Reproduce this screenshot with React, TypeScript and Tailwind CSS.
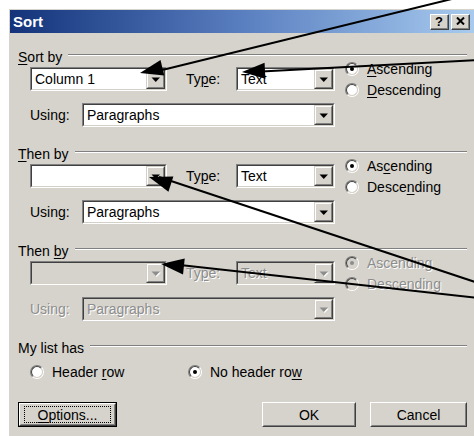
import React from 'react'

type Pt = [number, number]

// pointer arrows drawn over the dialog
const pointers: { tip: Pt; tail: Pt }[] = [
  { tip: [140, 73], tail: [464, -4] },
  { tip: [242, 72], tail: [478, 60] },
  { tip: [149, 177], tail: [478, 283] },
  { tip: [161, 264], tail: [478, 298] },
]

function headPoints(tip: Pt, tail: Pt, len = 23, half = 8) {
  const dx = tail[0] - tip[0]
  const dy = tail[1] - tip[1]
  const d = Math.hypot(dx, dy)
  const ux = dx / d
  const uy = dy / d
  const bx = tip[0] + ux * len
  const by = tip[1] + uy * len
  const px = -uy * half
  const py = ux * half
  return `${tip[0]},${tip[1]} ${bx + px},${by + py} ${bx - px},${by - py}`
}

function Mn({ children }: { children: React.ReactNode }) {
  return <span className="underline decoration-1 underline-offset-[2px]">{children}</span>
}

function DropButton({ disabled }: { disabled?: boolean }) {
  return (
    <div className="h-full w-[19px] border border-t-[#d4d0c8] border-l-[#d4d0c8] border-b-[#404040] border-r-[#404040]">
      <div className="flex h-full w-full items-center justify-center border border-t-white border-l-white border-b-[#808080] border-r-[#808080] bg-[#d6d3cc]">
        <svg width="10" height="6" viewBox="0 0 10 6" className="mt-[1px]">
          {disabled && <polygon points="1.5,1.5 10,1.5 5.75,6" fill="#ffffff" />}
          <polygon points="0.5,0.5 9,0.5 4.75,5" fill={disabled ? '#8d8d8d' : '#000000'} />
        </svg>
      </div>
    </div>
  )
}

function Combo({ className, value, disabled }: { className: string; value?: string; disabled?: boolean }) {
  return (
    <div className={`h-[24px] border border-t-[#808080] border-l-[#808080] border-b-white border-r-white ${className}`}>
      <div
        className={`flex h-full w-full border border-t-[#404040] border-l-[#404040] border-b-[#d4d0c8] border-r-[#d4d0c8] ${
          disabled ? 'bg-[#d6d3cc]' : 'bg-white'
        }`}
      >
        <div
          className={`flex flex-1 items-center pl-[3px] ${
            disabled ? 'text-[#8d8d8d] [text-shadow:1px_1px_0_#ffffff]' : 'text-black'
          }`}
        >
          {value}
        </div>
        <DropButton disabled={disabled} />
      </div>
    </div>
  )
}

function Radio({ checked, disabled }: { checked?: boolean; disabled?: boolean }) {
  return (
    <span className="inline-flex h-[14px] w-[14px] shrink-0 rounded-full border border-t-[#808080] border-l-[#808080] border-b-white border-r-white">
      <span
        className={`flex h-full w-full items-center justify-center rounded-full border border-t-[#404040] border-l-[#404040] border-b-[#d4d0c8] border-r-[#d4d0c8] ${
          disabled ? 'bg-[#d6d3cc]' : 'bg-white'
        }`}
      >
        {checked && <span className={`h-[4px] w-[4px] rounded-full ${disabled ? 'bg-[#8d8d8d]' : 'bg-black'}`} />}
      </span>
    </span>
  )
}

function RadioRow({ checked, disabled, children }: { checked?: boolean; disabled?: boolean; children: React.ReactNode }) {
  return (
    <div className="flex h-[16px] items-center">
      <Radio checked={checked} disabled={disabled} />
      <span className={`ml-[8px] ${disabled ? 'text-[#8d8d8d] [text-shadow:1px_1px_0_#ffffff]' : ''}`}>{children}</span>
    </div>
  )
}

function GroupLabel({ children, className = '' }: { children: React.ReactNode; className?: string }) {
  return (
    <div className={`flex h-[16px] items-center ${className}`}>
      <span>{children}</span>
      <div className="mb-[4px] ml-[6px] h-0 flex-1 border-t border-b border-t-[#808080] border-b-white" />
    </div>
  )
}

function SortGroup({
  label,
  field,
  disabled,
  first,
}: {
  label: React.ReactNode
  field?: string
  disabled?: boolean
  first?: boolean
}) {
  const dim = disabled ? 'text-[#8d8d8d] [text-shadow:1px_1px_0_#ffffff]' : ''
  return (
    <div className={first ? '' : 'mt-[19px]'}>
      <GroupLabel>{label}</GroupLabel>
      <div className="ml-[12px] mt-[2px] flex h-[24px] items-center">
        <Combo className="w-[137px]" value={field} disabled={disabled} />
        <span className={`ml-[19px] w-[50px] ${dim}`}>
          Ty<Mn>p</Mn>e:
        </span>
        <Combo className="w-[99px]" value="Text" disabled={disabled} />
        <div className="-mt-[6px] ml-[10px] flex flex-col gap-[5px] self-start">
          <RadioRow checked disabled={disabled}>
            {first ? (
              <>
                <Mn>A</Mn>scending
              </>
            ) : disabled ? (
              'Ascending'
            ) : (
              <>
                As<Mn>c</Mn>ending
              </>
            )}
          </RadioRow>
          <RadioRow disabled={disabled}>
            {first ? (
              <>
                <Mn>D</Mn>escending
              </>
            ) : disabled ? (
              'Descending'
            ) : (
              <>
                Desce<Mn>n</Mn>ding
              </>
            )}
          </RadioRow>
        </div>
      </div>
      <div className="ml-[12px] mt-[12px] flex h-[24px] items-center">
        <span className={`w-[52px] ${dim}`}>Using:</span>
        <Combo className="w-[253px]" value="Paragraphs" disabled={disabled} />
      </div>
    </div>
  )
}

function Button({ className, focused, children }: { className: string; focused?: boolean; children: React.ReactNode }) {
  const face = (
    <div className="h-full w-full border border-t-white border-l-white border-b-[#404040] border-r-[#404040]">
      <div className="flex h-full w-full items-center justify-center border border-t-[#d6d3cc] border-l-[#d6d3cc] border-b-[#808080] border-r-[#808080]">
        {focused ? (
          <div className="flex h-[17px] w-[calc(100%-6px)] items-center justify-center border border-dotted border-black">
            {children}
          </div>
        ) : (
          children
        )}
      </div>
    </div>
  )
  return (
    <div className={`h-[25px] ${focused ? 'border border-black' : ''} ${className}`}>{face}</div>
  )
}

function TitleButton({ children }: { children: React.ReactNode }) {
  return (
    <div className="h-[16px] w-[19px] border border-t-white border-l-white border-b-[#404040] border-r-[#404040] bg-[#d6d3cc]">
      <div className="flex h-full w-full items-center justify-center border-b border-r border-b-[#808080] border-r-[#808080]">
        {children}
      </div>
    </div>
  )
}

export default function App() {
  return (
    <div className="relative h-[436px] w-[474px] overflow-hidden bg-white font-['Liberation_Sans',Arial,sans-serif] text-[14px] leading-[16px] text-black">
      <div className="ml-[9px] mt-[9px] w-[467px] bg-[#d6d3cc] p-[1px]">
        {/* caption */}
        <div className="flex h-[23px] items-center bg-linear-to-r from-[#14337a] via-[#5a7fc0] to-[#a8cbee] pl-[3px] pr-[5px]">
          <span className="text-[15px] font-bold text-white">Sort</span>
          <div className="ml-auto flex gap-[2px]">
            <TitleButton>
              <span className="text-[13px] font-bold leading-none">?</span>
            </TitleButton>
            <TitleButton>
              <svg width="9" height="8" viewBox="0 0 9 8">
                <path d="M1 0.5 L8 7.5 M8 0.5 L1 7.5" stroke="#000" strokeWidth="2" />
              </svg>
            </TitleButton>
          </div>
        </div>

        <div className="pb-[12px] pl-[8px] pr-[8px] pt-[16px]">
          <SortGroup
            first
            field="Column 1"
            label={
              <>
                <Mn>S</Mn>ort by
              </>
            }
          />
          <SortGroup
            label={
              <>
                <Mn>T</Mn>hen by
              </>
            }
          />
          <SortGroup
            disabled
            label={
              <>
                Then <Mn>b</Mn>y
              </>
            }
          />

          <GroupLabel className="mt-[19px]">My list has</GroupLabel>
          <div className="ml-[12px] mt-[8px] flex">
            <div className="w-[158px]">
              <RadioRow>
                Header <Mn>r</Mn>ow
              </RadioRow>
            </div>
            <RadioRow checked>
              No header ro<Mn>w</Mn>
            </RadioRow>
          </div>

          <div className="mt-[22px] flex">
            <Button className="w-[99px]" focused>
              <span>
                <Mn>O</Mn>ptions...
              </span>
            </Button>
            <Button className="ml-auto w-[94px]">OK</Button>
            <Button className="ml-[14px] w-[97px]">Cancel</Button>
          </div>
        </div>
      </div>

      <svg className="pointer-events-none absolute inset-0" width="474" height="436" viewBox="0 0 474 436">
        {pointers.map((p, i) => (
          <g key={i}>
            <line x1={p.tip[0] + 10} y1={p.tip[1]} x2={p.tail[0]} y2={p.tail[1]} stroke="#000" strokeWidth="2" />
            <polygon points={headPoints(p.tip, p.tail)} fill="#000" />
          </g>
        ))}
      </svg>
    </div>
  )
}
